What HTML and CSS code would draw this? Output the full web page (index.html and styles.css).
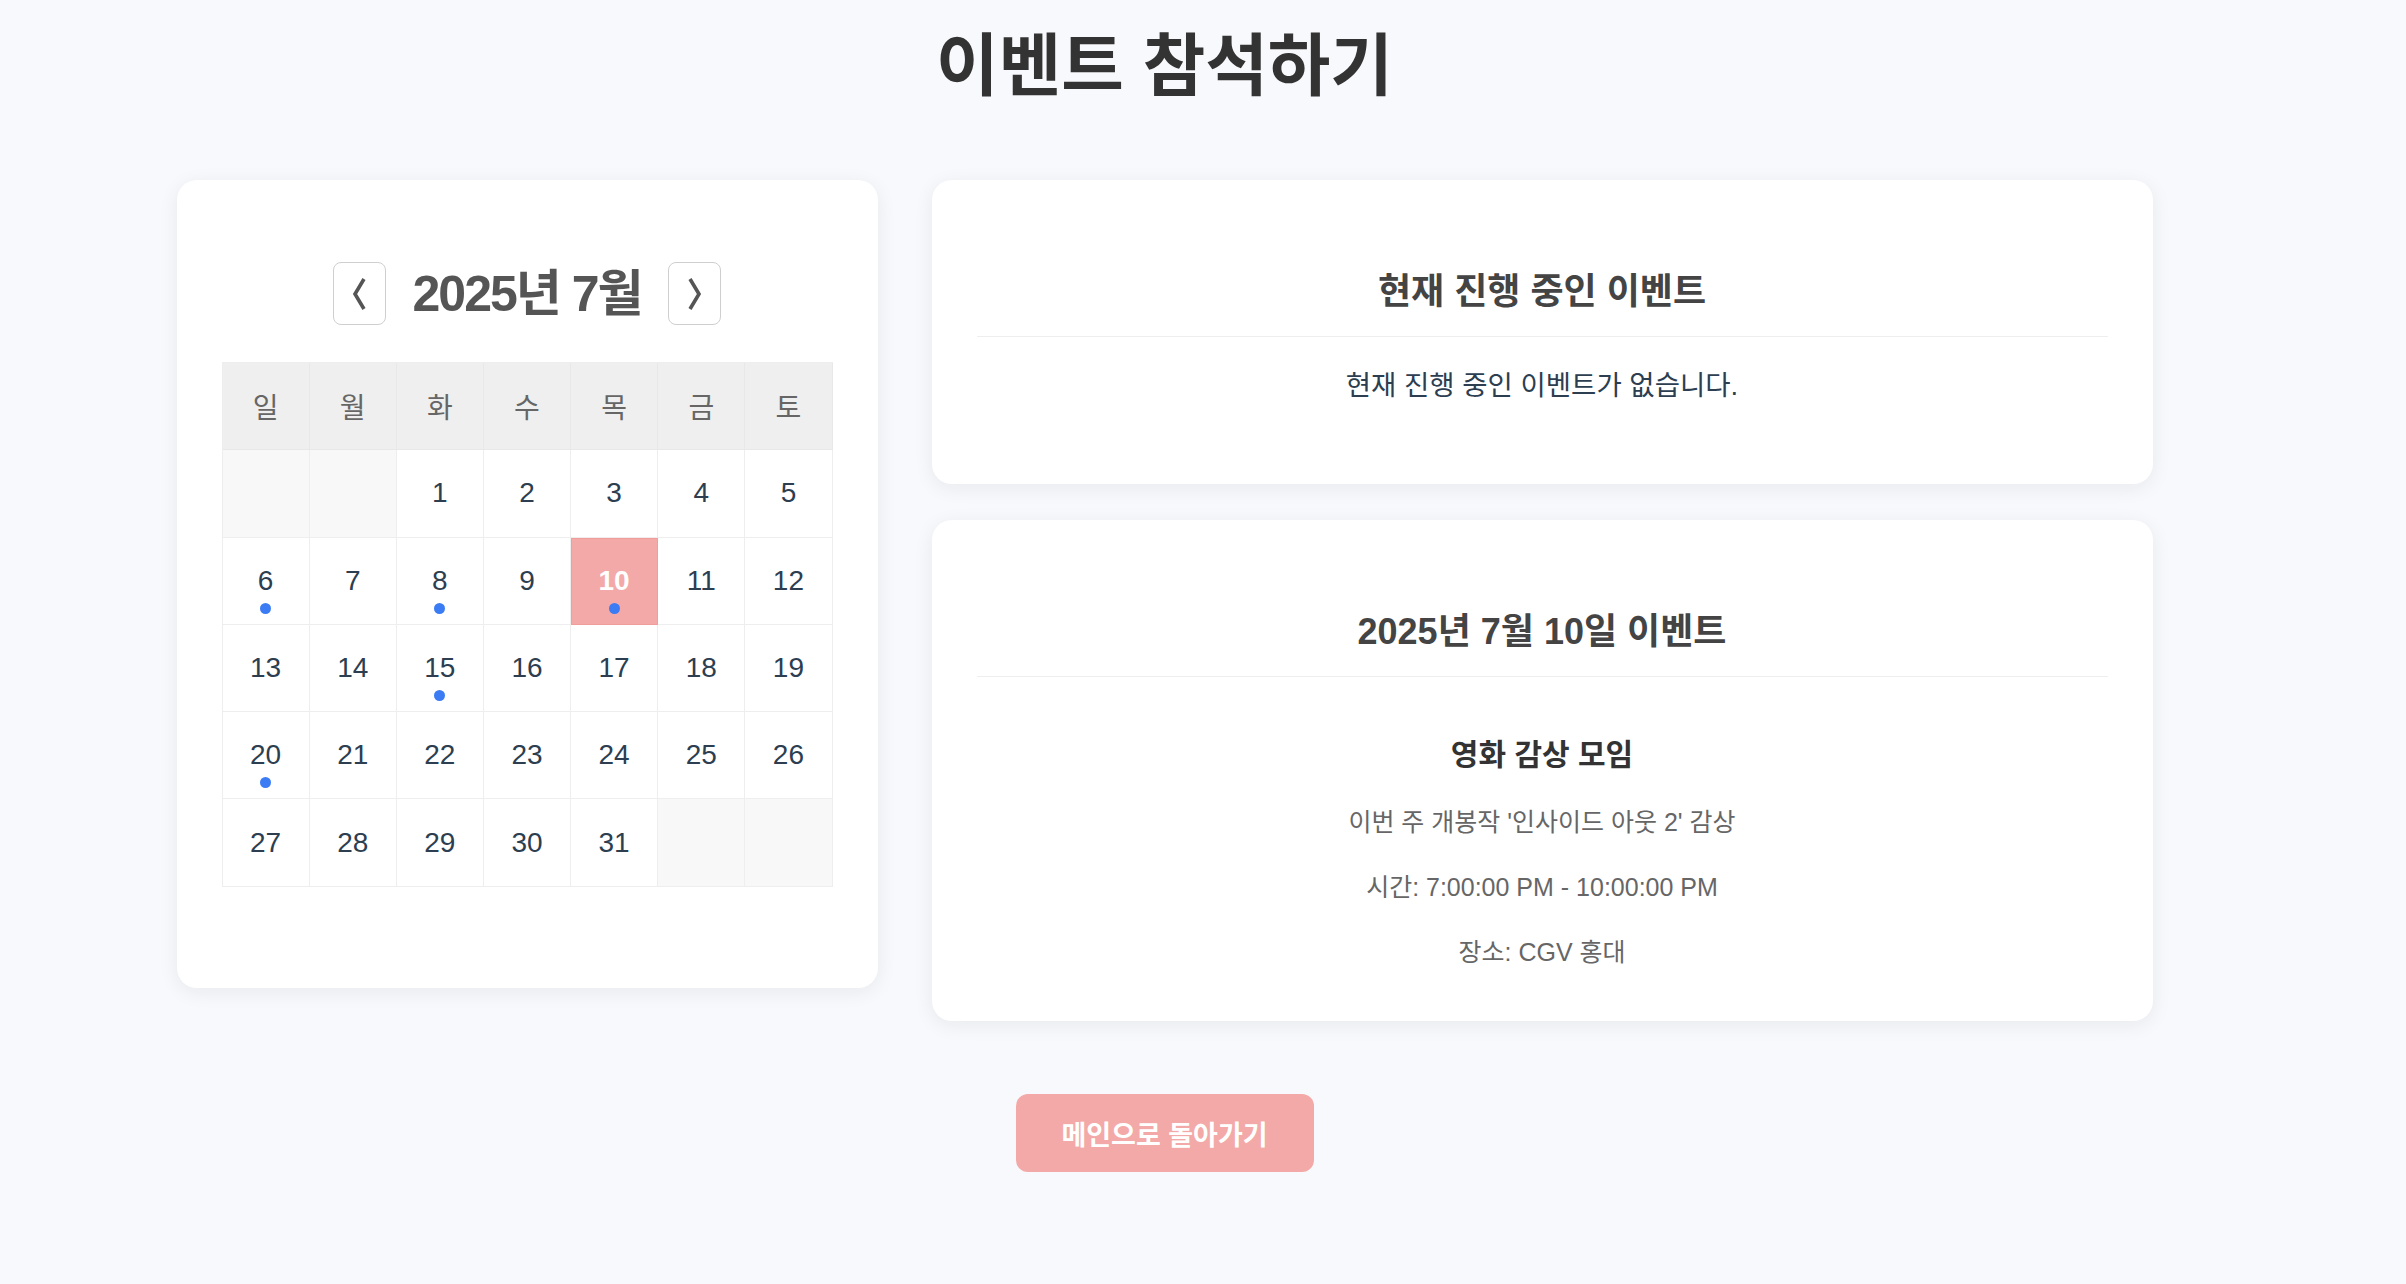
FILE: index.html
```html
<!DOCTYPE html>
<html lang="ko">
<head>
<meta charset="utf-8">
<title>이벤트 참석하기</title>
<link rel="stylesheet" href="styles.css">
</head>
<body>
<div class="page">
  <h1 class="page-title">이벤트 참석하기</h1>
  <div class="layout">
    <section class="card calendar-card">
      <div class="calendar-nav">
        <button class="nav-btn" aria-label="이전 달">
          <svg width="14" height="32" viewBox="0 0 14 32"><polyline points="12,1 3,16 12,31" fill="none" stroke="#555" stroke-width="3.6"/></svg>
        </button>
        <h2 class="month-title">2025년 7월</h2>
        <button class="nav-btn" aria-label="다음 달">
          <svg width="14" height="32" viewBox="0 0 14 32"><polyline points="2,1 11,16 2,31" fill="none" stroke="#555" stroke-width="3.6"/></svg>
        </button>
      </div>
      <div class="cal-grid">
        <div class="cell head">일</div>
        <div class="cell head">월</div>
        <div class="cell head">화</div>
        <div class="cell head">수</div>
        <div class="cell head">목</div>
        <div class="cell head">금</div>
        <div class="cell head">토</div>

        <div class="cell empty"></div>
        <div class="cell empty"></div>
        <div class="cell">1</div>
        <div class="cell">2</div>
        <div class="cell">3</div>
        <div class="cell">4</div>
        <div class="cell">5</div>

        <div class="cell has-event">6<span class="dot"></span></div>
        <div class="cell">7</div>
        <div class="cell has-event">8<span class="dot"></span></div>
        <div class="cell">9</div>
        <div class="cell has-event selected">10<span class="dot"></span></div>
        <div class="cell">11</div>
        <div class="cell">12</div>

        <div class="cell">13</div>
        <div class="cell">14</div>
        <div class="cell has-event">15<span class="dot"></span></div>
        <div class="cell">16</div>
        <div class="cell">17</div>
        <div class="cell">18</div>
        <div class="cell">19</div>

        <div class="cell has-event">20<span class="dot"></span></div>
        <div class="cell">21</div>
        <div class="cell">22</div>
        <div class="cell">23</div>
        <div class="cell">24</div>
        <div class="cell">25</div>
        <div class="cell">26</div>

        <div class="cell">27</div>
        <div class="cell">28</div>
        <div class="cell">29</div>
        <div class="cell">30</div>
        <div class="cell">31</div>
        <div class="cell empty"></div>
        <div class="cell empty"></div>
      </div>
    </section>

    <div class="side">
      <section class="card info-card">
        <h3 class="card-title">현재 진행 중인 이벤트</h3>
        <p class="empty-msg">현재 진행 중인 이벤트가 없습니다.</p>
      </section>
      <section class="card info-card">
        <h3 class="card-title">2025년 7월 10일 이벤트</h3>
        <div class="event-item">
          <h4 class="event-name">영화 감상 모임</h4>
          <p class="event-line">이번 주 개봉작 '인사이드 아웃 2' 감상</p>
          <p class="event-line">시간: 7:00:00 PM - 10:00:00 PM</p>
          <p class="event-line">장소: CGV 홍대</p>
        </div>
      </section>
    </div>
  </div>
  <div class="actions">
    <button class="back-btn">메인으로 돌아가기</button>
  </div>
</div>
</body>
</html>
```
FILE: styles.css
```css
* { box-sizing: border-box; }
html, body { margin: 0; }
body {
  background: #f8f9fc;
  font-family: "Liberation Sans", "Noto Sans CJK KR", sans-serif;
  padding: 0 77px 0 0;
}
.page { width: 1976px; margin: 0 auto; }
.page-title {
  margin: 26px 0 74px;
  font-size: 68px;
  line-height: 80px;
  text-align: center;
  color: #333;
  font-weight: 700;
}
.layout {
  display: grid;
  grid-template-columns: 701px 1fr;
  column-gap: 54px;
  align-items: start;
}
.card {
  background: #fff;
  border-radius: 20px;
  box-shadow: 0 4px 20px rgba(20, 30, 60, 0.07);
  padding: 45px;
}
.calendar-nav {
  display: flex;
  justify-content: center;
  align-items: center;
  gap: 27px;
  margin: 37px 0;
}
.nav-btn {
  width: 53px;
  height: 63px;
  border: 1px solid #cfcfcf;
  border-radius: 8px;
  background: #fff;
  display: flex;
  align-items: center;
  justify-content: center;
  padding: 0;
}
.month-title {
  margin: 0;
  font-size: 50px;
  line-height: 60px;
  color: #555;
  font-weight: 700;
  letter-spacing: -2px;
}
.cal-grid {
  display: grid;
  grid-template-columns: repeat(7, 1fr);
  border-left: 1px solid #eee;
  border-top: 1px solid #eee;
  margin-bottom: 56px;
}
.cell {
  position: relative;
  height: 87.3px;
  border-right: 1px solid #eee;
  border-bottom: 1px solid #eee;
  display: flex;
  align-items: center;
  justify-content: center;
  font-size: 28px;
  color: #2c3e50;
  background: #fff;
}
.cell.head {
  background: #efefef;
  color: #666;
  border-right-color: #e8e8e8;
  border-bottom-color: #e8e8e8;
}
.cell.empty { background: #f8f8f8; }
.cell.selected {
  background: #f3a9a7;
  color: #fff;
  font-weight: 700;
  outline: 1px solid #f19e9b;
  outline-offset: -1px;
}
.dot {
  position: absolute;
  left: 50%;
  bottom: 10px;
  width: 11px;
  height: 11px;
  margin-left: -5.5px;
  border-radius: 50%;
  background: #3b7cf4;
}
.side {
  display: flex;
  flex-direction: column;
  gap: 36px;
}
.card-title {
  margin: 47px 0 0;
  padding-bottom: 24px;
  border-bottom: 1px solid #eee;
  font-size: 36px;
  line-height: 40px;
  text-align: center;
  color: #444;
  font-weight: 700;
}
.empty-msg {
  margin: 33px 0 37px;
  font-size: 27.5px;
  line-height: 32px;
  text-align: center;
  color: #2c3e50;
}
.event-item {
  margin: 61px 0 9px;
  display: flex;
  flex-direction: column;
  gap: 36px;
  text-align: center;
}
.event-name {
  margin: 0;
  font-size: 30px;
  line-height: 34px;
  color: #333;
  font-weight: 700;
}
.event-line {
  margin: 0;
  font-size: 25px;
  line-height: 29px;
  color: #666;
}
.actions {
  display: flex;
  justify-content: center;
  margin-top: 73px;
}
.back-btn {
  width: 298px;
  height: 78px;
  border: none;
  border-radius: 12px;
  background: #f3a9a7;
  color: #fff;
  font-family: inherit;
  font-size: 27px;
  font-weight: 700;
}
```
